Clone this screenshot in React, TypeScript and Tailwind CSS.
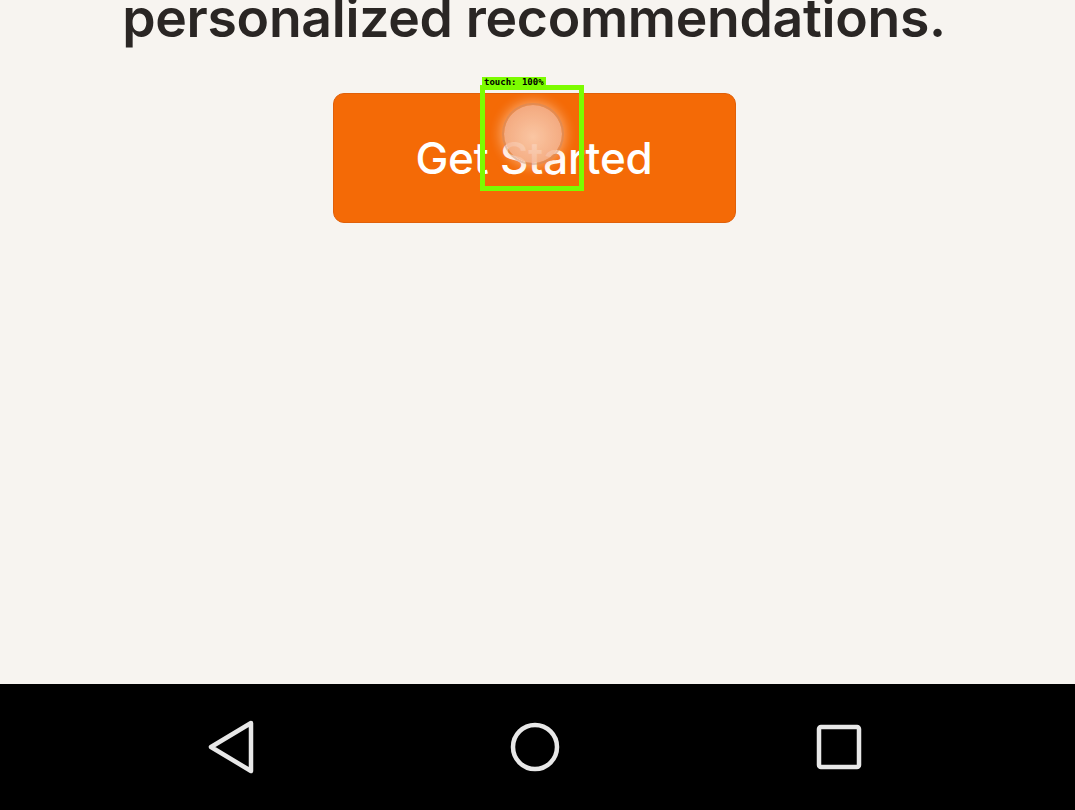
export default function App() {
  return (
    <div className="flex h-[810px] w-[1075px] flex-col overflow-hidden bg-[#f7f4f0]" style={{ fontFamily: "Inter, 'Noto Sans', sans-serif" }}>
      <main className="relative flex flex-1 flex-col items-center overflow-hidden pr-[7px]">
        <h1 className="-mt-[18px] text-[53.5px] font-semibold leading-[72px] tracking-[-0.3px] text-[#2a2624]">
          personalized recommendations.
        </h1>
        <button className="mt-[39px] flex h-[130px] w-[403px] items-center justify-center rounded-[11px] border border-[#e0600a] bg-[#f46a06] text-[44px] font-medium tracking-[-0.2px] text-white">
          Get Started
        </button>

        {/* touch indicator overlay */}
        <div className="absolute left-[480px] top-[85px] h-[106px] w-[104px] border-[5px] border-[#7cfc00]">
          <div className="absolute -left-[3px] -top-[13px] bg-[#7cfc00] px-[2px] text-[9px] font-bold leading-[10px] text-black" style={{ fontFamily: "'DejaVu Sans Mono', monospace" }}>
            touch: 100%
          </div>
          <div className="absolute left-[19px] top-[15px] h-[58px] w-[58px] rounded-full bg-[radial-gradient(circle_at_50%_55%,#fbd0b4,#f2a57d)] opacity-90 shadow-[0_0_12px_4px_rgba(255,200,160,0.7)] ring-2 ring-[#c98a6a]/50" />
        </div>
      </main>

      <nav className="flex h-[126px] items-center justify-center gap-[244px] bg-black pr-[5px]">
        <div className="flex w-[60px] justify-center">
          <svg width="48" height="54" viewBox="0 0 48 54">
            <path d="M44 3 L4 27 L44 51 Z" fill="none" stroke="#e8e8e8" strokeWidth="4.5" strokeLinejoin="round" />
          </svg>
        </div>
        <div className="flex w-[60px] justify-center">
          <svg width="54" height="54" viewBox="0 0 54 54">
            <circle cx="27" cy="27" r="22" fill="none" stroke="#e8e8e8" strokeWidth="4.5" />
          </svg>
        </div>
        <div className="flex w-[60px] justify-center">
          <svg width="50" height="50" viewBox="0 0 50 50">
            <rect x="5" y="5" width="40" height="40" rx="2" fill="none" stroke="#e8e8e8" strokeWidth="4.5" />
          </svg>
        </div>
      </nav>
    </div>
  );
}
